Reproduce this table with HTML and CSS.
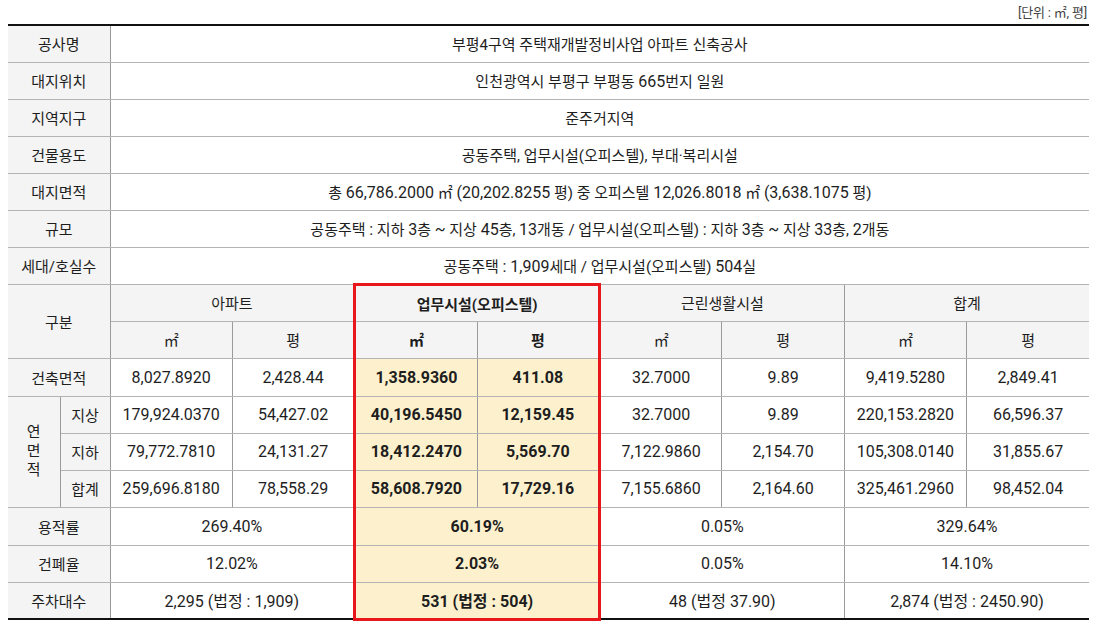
FILE: index.html
```html
<!DOCTYPE html>
<html lang="ko">
<head>
<meta charset="utf-8">
<link rel="stylesheet" href="styles.css">
</head>
<body>
<div class="wrap">
  <div class="unit">[단위 : ㎡, 평]</div>
  <table class="spec">
    <colgroup>
      <col class="c-a"><col class="c-b">
      <col class="c-d"><col class="c-d"><col class="c-d"><col class="c-d">
      <col class="c-d"><col class="c-d"><col class="c-d"><col class="c-d">
    </colgroup>
    <tbody>
      <tr class="first"><th colspan="2">공사명</th><td colspan="8" class="txt">부평4구역 주택재개발정비사업 아파트 신축공사</td></tr>
      <tr><th colspan="2">대지위치</th><td colspan="8" class="txt">인천광역시 부평구 부평동 <span class="n">665</span>번지 일원</td></tr>
      <tr><th colspan="2">지역지구</th><td colspan="8" class="txt">준주거지역</td></tr>
      <tr><th colspan="2">건물용도</th><td colspan="8" class="txt">공동주택, 업무시설(오피스텔), 부대·복리시설</td></tr>
      <tr><th colspan="2">대지면적</th><td colspan="8" class="txt">총 <span class="n">66,786.2000</span> ㎡ <span class="n">(20,202.8255</span> 평) 중 오피스텔 <span class="n">12,026.8018</span> ㎡ <span class="n">(3,638.1075</span> 평)</td></tr>
      <tr><th colspan="2">규모</th><td colspan="8" class="txt">공동주택 <span class="n">:</span> 지하 <span class="n">3</span>층 <span class="n">~</span> 지상 <span class="n">45</span>층, <span class="n">13</span>개동 / 업무시설(오피스텔) <span class="n">:</span> 지하 <span class="n">3</span>층 <span class="n">~</span> 지상 <span class="n">33</span>층, <span class="n">2</span>개동</td></tr>
      <tr><th colspan="2">세대/호실수</th><td colspan="8" class="txt">공동주택 <span class="n">: 1,909</span>세대 / 업무시설(오피스텔) <span class="n">504</span>실</td></tr>
      <tr>
        <th colspan="2" rowspan="2">구분</th>
        <th colspan="2" class="hd">아파트</th>
        <th colspan="2" class="hd hl-top hl-l hl-r strong">업무시설(오피스텔)</th>
        <th colspan="2" class="hd">근린생활시설</th>
        <th colspan="2" class="hd">합계</th>
      </tr>
      <tr>
        <th class="hd">㎡</th><th class="hd">평</th>
        <th class="hd hl-l strong">㎡</th><th class="hd hl-r strong">평</th>
        <th class="hd">㎡</th><th class="hd">평</th>
        <th class="hd">㎡</th><th class="hd">평</th>
      </tr>
      <tr class="tall">
        <th colspan="2">건축면적</th>
        <td>8,027.8920</td><td>2,428.44</td>
        <td class="hl hl-l">1,358.9360</td><td class="hl hl-r">411.08</td>
        <td>32.7000</td><td>9.89</td>
        <td>9,419.5280</td><td>2,849.41</td>
      </tr>
      <tr>
        <th rowspan="3" class="vert">연<br>면<br>적</th>
        <th>지상</th>
        <td>179,924.0370</td><td>54,427.02</td>
        <td class="hl hl-l">40,196.5450</td><td class="hl hl-r">12,159.45</td>
        <td>32.7000</td><td>9.89</td>
        <td>220,153.2820</td><td>66,596.37</td>
      </tr>
      <tr>
        <th>지하</th>
        <td>79,772.7810</td><td>24,131.27</td>
        <td class="hl hl-l">18,412.2470</td><td class="hl hl-r">5,569.70</td>
        <td>7,122.9860</td><td>2,154.70</td>
        <td>105,308.0140</td><td>31,855.67</td>
      </tr>
      <tr>
        <th>합계</th>
        <td>259,696.8180</td><td>78,558.29</td>
        <td class="hl hl-l">58,608.7920</td><td class="hl hl-r">17,729.16</td>
        <td>7,155.6860</td><td>2,164.60</td>
        <td>325,461.2960</td><td>98,452.04</td>
      </tr>
      <tr class="tall">
        <th colspan="2">용적률</th>
        <td colspan="2">269.40%</td>
        <td colspan="2" class="hl hl-l hl-r">60.19%</td>
        <td colspan="2">0.05%</td>
        <td colspan="2">329.64%</td>
      </tr>
      <tr>
        <th colspan="2">건폐율</th>
        <td colspan="2">12.02%</td>
        <td colspan="2" class="hl hl-l hl-r">2.03%</td>
        <td colspan="2">0.05%</td>
        <td colspan="2">14.10%</td>
      </tr>
      <tr class="last">
        <th colspan="2">주차대수</th>
        <td colspan="2">2,295 (법정 : 1,909)</td>
        <td colspan="2" class="hl hl-l hl-r hl-bot">531 (법정 : 504)</td>
        <td colspan="2">48 (법정 37.90)</td>
        <td colspan="2">2,874 (법정 : 2450.90)</td>
      </tr>
    </tbody>
  </table>
</div>
</body>
</html>
```

FILE: styles.css
```css
html, body {
  margin: 0;
  padding: 0;
  background: #ffffff;
}

body {
  font-family: Roboto, "Noto Sans CJK KR", sans-serif;
  color: #1e1e1e;
}

.wrap {
  width: 1081px;
  padding: 0 0 0 8px;
}

.unit {
  height: 24px;
  line-height: 26px;
  font-size: 13px;
  color: #444444;
  text-align: right;
  padding-right: 2px;
  letter-spacing: -0.2px;
}

.spec {
  width: 1081px;
  border-collapse: collapse;
  table-layout: fixed;
  font-size: 15px;
}

.c-a { width: 52px; }
.c-b { width: 50px; }
.c-d { width: 122.375px; }

.spec tr {
  height: 37px;
}

.spec tr.tall {
  height: 38px;
}

.spec th,
.spec td {
  border-top: 1px solid #b4b4b4;
  border-bottom: 1px solid #b4b4b4;
  border-left: 1px solid #9a9a9a;
  border-right: 1px solid #9a9a9a;
  text-align: center;
  vertical-align: middle;
  padding: 0;
  font-weight: 400;
  white-space: nowrap;
}

.spec th {
  background: #f4f4f4;
  font-size: 15px;
}

.spec td {
  background: #ffffff;
  font-size: 16px;
}

.spec td.txt {
  font-size: 15px;
}

.spec td.txt .n {
  font-size: 16px;
}

.spec tr.first th,
.spec tr.first td {
  border-top: 2px solid #111111;
}

.spec tr.last th,
.spec tr.last td {
  border-bottom: 2px solid #111111;
}

.spec th:first-child,
.spec td:first-child {
  border-left: none;
}

.spec tr > *:last-child {
  border-right: none;
}

.spec th.vert {
  line-height: 19px;
  border-left: none;
}

.spec .strong {
  font-weight: 700;
}

.spec td.hl {
  background: #fdf1cd;
  font-weight: 700;
}

.spec .hl-l { border-left: 3px solid #e8171b; }
.spec .hl-r { border-right: 3px solid #e8171b; }
.spec .hl-top { border-top: 3px solid #e8171b; }
.spec tr.last td.hl-bot { border-bottom: 3px solid #e8171b; }
```
